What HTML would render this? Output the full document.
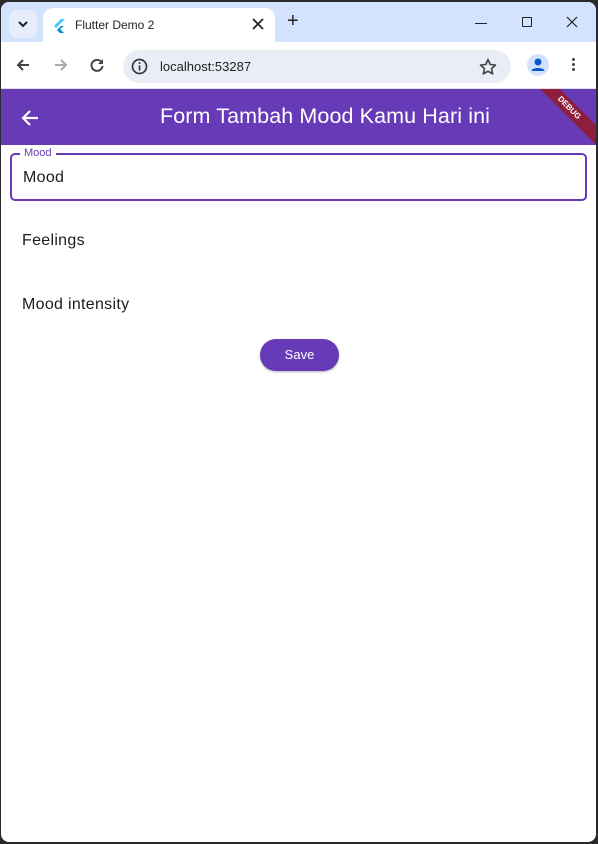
<!DOCTYPE html>
<html><head><meta charset="utf-8"><style>
*{margin:0;padding:0;box-sizing:border-box}
body{width:598px;height:844px;background:#2a2a2c;font-family:"Liberation Sans",sans-serif;position:relative;overflow:hidden}
.win{position:absolute;left:1px;top:2px;width:595px;height:840px;background:#fff;border-radius:8px;overflow:hidden}
.tabbar{position:absolute;left:0;top:0;width:100%;height:40px;background:#d3e3fd}
.tabbtn{position:absolute;left:8px;top:8px;width:28px;height:28px;background:#e6eefb;border-radius:8px}
.tab{position:absolute;left:42px;top:6px;width:232px;height:36px;background:#fff;border-radius:10px 10px 0 0}
.toolbar{position:absolute;left:0;top:40px;width:100%;height:47px;background:#fff;border-bottom:1px solid #e0e0e0}
.omni{position:absolute;left:122px;top:8px;width:388px;height:33px;background:#e9eef6;border-radius:17px}
.appbar{position:absolute;left:0;top:87px;width:100%;height:56px;background:#673ab7;overflow:hidden}
.title{position:absolute;left:159px;top:15px;color:#fff;font-size:21.5px;letter-spacing:.1px}
.ribbon{position:absolute;right:-28px;top:12px;width:110px;height:14px;background:#8e1f3c;transform:rotate(45deg);color:#fff;font-size:8px;font-weight:bold;text-align:center;line-height:14px}
.field{position:absolute;left:9px;top:151px;width:577px;height:48px;border:2px solid #673ab7;border-radius:5px}
.lbl{position:absolute;left:8px;top:-8px;background:#fff;padding:0 4px;color:#673ab7;font-size:11px}
.t{position:absolute;font-size:16px;color:#1c1b1f;letter-spacing:.3px}
.save{position:absolute;left:259px;top:337px;width:79px;height:32px;background:#673ab7;border-radius:16px;color:#fff;font-size:13px;text-align:center;line-height:32px;box-shadow:0 1px 2px rgba(0,0,0,.3)}
</style></head><body>
<div class="win">
<div class="tabbar">
<div class="tabbtn"><svg width="28" height="28"><path d="M10 12l4 4 4-4" stroke="#222" stroke-width="2" fill="none"/></svg></div>
<div class="tab">
<svg style="position:absolute;left:11px;top:11px" width="12" height="14"><path d="M7 0L0 7l2 2 9-9z" fill="#40c4ff"/><path d="M7 7l-4 4 3 3h4l-4-4 4-3z" fill="#0288d1"/></svg>
<span style="position:absolute;left:32px;top:10px;font-size:12px;color:#222">Flutter Demo 2</span>
<svg style="position:absolute;left:209px;top:10px" width="12" height="12"><path d="M1 1l10 10M11 1L1 11" stroke="#222" stroke-width="1.8"/></svg>
</div>
<span style="position:absolute;left:286px;top:8px;font-size:20px;color:#222">+</span>
<div style="position:absolute;left:474px;top:21px;width:12px;height:1px;background:#222"></div>
<div style="position:absolute;left:521px;top:15px;width:10px;height:10px;border:1px solid #222;border-radius:1px"></div>
<svg style="position:absolute;left:565px;top:14px" width="12" height="12"><path d="M1 1l10 10M11 1L1 11" stroke="#222" stroke-width="1.2"/></svg>
</div>
<div class="toolbar">
<svg style="position:absolute;left:14px;top:15px" width="16" height="16"><path d="M14 8H3M8 3L3 8l5 5" stroke="#444" stroke-width="2" fill="none"/></svg>
<svg style="position:absolute;left:52px;top:15px" width="16" height="16"><path d="M2 8h11M8 3l5 5-5 5" stroke="#aaa" stroke-width="2" fill="none"/></svg>
<svg style="position:absolute;left:88px;top:15px" width="16" height="16"><path d="M13 6A5.5 5.5 0 1 0 13.5 9" stroke="#444" stroke-width="2" fill="none"/><path d="M14 2v5h-5z" fill="#444"/></svg>
<div class="omni">
<svg style="position:absolute;left:8px;top:8px" width="17" height="17"><circle cx="8.5" cy="8.5" r="7" stroke="#333" stroke-width="1.7" fill="none"/><rect x="7.7" y="7.5" width="1.7" height="5" fill="#333"/><rect x="7.7" y="4.3" width="1.7" height="1.7" fill="#333"/></svg>
<span style="position:absolute;left:37px;top:9px;font-size:13px;color:#222">localhost:53287</span>
<svg style="position:absolute;left:356px;top:8px" width="18" height="18"><path d="M9 1.5l2.2 5 5.3.5-4 3.6 1.2 5.3L9 13.2 4.3 15.9l1.2-5.3-4-3.6 5.3-.5z" stroke="#444" stroke-width="1.6" fill="none" stroke-linejoin="round"/></svg>
</div>
<div style="position:absolute;left:526px;top:12px;width:22px;height:22px;border-radius:50%;background:#d3e3fd"><svg width="22" height="22"><circle cx="11" cy="8" r="3.5" fill="#0b57d0"/><path d="M4.5 17c0-4 13-4 13 0z" fill="#0b57d0"/></svg></div>
<div style="position:absolute;left:571px;top:16px;width:3px;height:3px;border-radius:50%;background:#444;box-shadow:0 5px 0 #444,0 10px 0 #444"></div>
</div>
<div class="appbar">
<svg style="position:absolute;left:20px;top:20px" width="18" height="18"><path d="M17 9H3M9 2L2 9l7 7" stroke="#fff" stroke-width="2.2" fill="none"/></svg>
<div class="title">Form Tambah Mood Kamu Hari ini</div>
<div class="ribbon">DEBUG</div>
</div>
<div class="field"><span class="lbl">Mood</span><span class="t" style="left:11px;top:14px">Mood</span></div>
<span class="t" style="left:21px;top:230px">Feelings</span>
<span class="t" style="left:21px;top:294px">Mood intensity</span>
<div class="save">Save</div>
</div>
</body></html>
